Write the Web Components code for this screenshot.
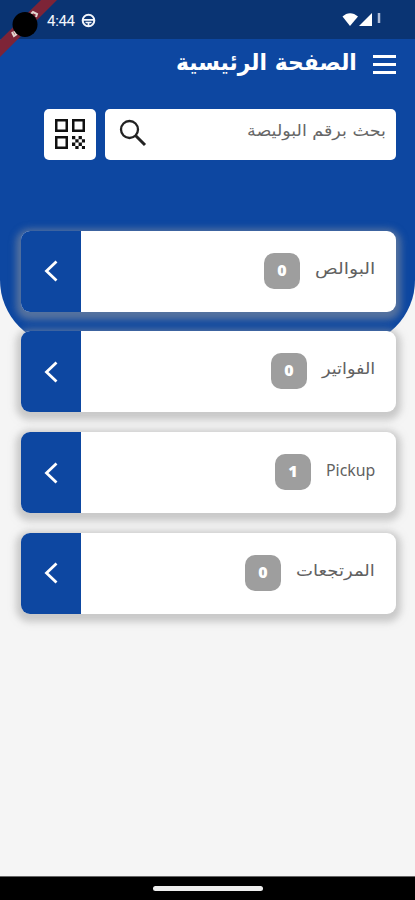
<!DOCTYPE html>
<html lang="ar"><head><meta charset="utf-8"><title>الصفحة الرئيسية</title>
<style>html,body{margin:0;height:100%;overflow:hidden;background:#f5f5f5}</style></head>
<body><home-screen></home-screen>
<script>
const define=(name,html,init)=>customElements.define(name,class extends HTMLElement{
  connectedCallback(){
    if(this.shadowRoot)return;
    const t=document.createElement('template');t.innerHTML=html;
    this.attachShadow({mode:'open'}).append(t.content.cloneNode(true));
    if(init)init(this,this.shadowRoot);
  }
});

// One line of text, condensed or widened to the width it is given.
define('fit-text',`<style>
:host{display:block;height:24px;line-height:24px;white-space:nowrap;direction:rtl}
span{display:inline-block;line-height:24px;transform-origin:100% 50%}
</style><span><slot></slot></span>`,(el,root)=>{
  const w=+el.getAttribute('width'),s=root.querySelector('span');
  el.style.width=w+'px';
  s.style.transform='scaleX('+w/s.offsetWidth+')';
});

define('status-bar',`<style>
:host{display:flex;position:relative;box-sizing:border-box;height:39px;background:#0a3473;align-items:center;padding:2px 31px 0 47px;color:#f2f5fb;font:15px/20px Roboto,sans-serif}
.band{position:absolute;left:0;top:0}
.time{width:28px;letter-spacing:-.3px}.globe{margin-left:6px}
.right{margin-left:auto;margin-top:-1px}
</style>
<svg class="band" width="62" height="62" viewBox="0 0 62 62"><path d="M41 0H57L0 57V40Z" fill="#7d2437"/><g stroke="#e6d5cf" stroke-width="2" fill="none"><path d="M31 14l2-2 4 2-1 3"/><path d="M12 32l2 4 3-2M14 31l2 3"/></g><circle cx="25" cy="24.500" r="12.500" fill="#000"/></svg>
<span class="time">4:44</span>
<svg class="globe" width="15" height="15" viewBox="0 0 15 15"><circle cx="7.500" cy="7.500" r="5.800" fill="none" stroke="#f2f5fb" stroke-width="2"/><path d="M2 6.800h11M4.500 9.500h6M7.500 9v4" stroke="#f2f5fb" stroke-width="1.700"/></svg>
<svg class="right" width="42" height="16" viewBox="0 0 42 16"><path d="M.5 4.500C5 0 11 0 16 4.500L8 14Z" fill="#fff"/><path d="M17 14L30 1V14Z" fill="#fff"/><path d="M37 1v10" stroke="#aebcd8" stroke-width="2.500"/></svg>`);

define('page-header',`<style>
:host{display:block;box-sizing:border-box;height:307px;border-radius:0 0 66px 66px;background:#0d47a1;padding-top:11px}
.title{display:flex;direction:rtl;padding-right:19px;gap:16px;color:#fff;font:bold 23px "DejaVu Sans",sans-serif}
.title svg{margin-top:4px}
.search{display:flex;gap:9px;padding:33px 19px 0 44px}
.box{box-sizing:border-box;height:51px;background:#fff;border-radius:5px;display:flex}
.qr{width:52px;align-items:center;justify-content:center}
.field{flex:1;justify-content:space-between;padding:10px 10px 0 14px;color:#666;font:16px "DejaVu Sans",sans-serif}
</style>
<div class="title"><svg width="23" height="22" viewBox="0 0 23 22"><path d="M0 2.500h23M0 10.500h23M0 18.500h23" stroke="#fff" stroke-width="3"/></svg><fit-text width="181">الصفحة الرئيسية</fit-text></div>
<div class="search"><div class="box qr">
<svg width="30" height="31" viewBox="0 0 30 31" fill="#111"><path fill-rule="evenodd" d="M0 0h13v13H0zM2.500 2.500v8h8v-8zM17 0h13v13H17zM19.500 2.500v8h8v-8zM0 17h13v13H0zM2.500 19.500v8h8v-8z"/><path d="M17 17h3.300v3.300H17zM23.600 17h3.300v3.300h-3.300zM20.300 20.300h3.300v3.300h-3.300zM26.900 20.300h3.100v3.300h-3.100zM17 23.600h3.300v3.300H17zM23.600 23.600h3.300v3.300h-3.300zM20.300 26.900h3.300v3.100h-3.300zM26.900 26.900h3.100v3.100h-3.100z"/></svg></div>
<div class="box field"><svg width="28" height="28" viewBox="0 0 28 28" fill="none" stroke="#222"><circle cx="10.500" cy="10.500" r="8.500" stroke-width="2.300"/><path d="M16.500 16.500L26 26" stroke-width="3"/></svg><fit-text width="139">بحث برقم البوليصة</fit-text></div></div>`);

define('menu-card',`<style>
:host{display:flex;height:81px;border-radius:9px;background:#fff;direction:rtl;box-shadow:0 3px 7px 5px rgba(158,158,158,.5);color:#616161;font:16px "DejaVu Sans",sans-serif}
.label{margin:26px 21px 0 0}
.badge{box-sizing:border-box;width:36px;height:36px;border-radius:10px;background:#9e9e9e;color:#fff;margin:22px 15px 0 auto;text-align:center;font:800 16px/34px "Open Sans","Noto Sans",sans-serif}
.go{width:60px;border-radius:9px 0 0 9px;background:#0d47a1;display:flex;align-items:center;justify-content:center}
</style><div class="label"><slot></slot></div><div class="badge"></div><div class="go"><svg width="14" height="22" viewBox="0 0 14 22"><path d="M12.500 1.500L2.500 11L12.500 20.500" fill="none" stroke="#fff" stroke-width="2.800"/></svg></div>`,(el,root)=>{root.querySelector('.badge').textContent=el.getAttribute('count')});

define('gesture-bar',`<style>
:host{display:flex;box-sizing:border-box;height:24px;background:#000;border-top:1px solid #666;justify-content:center;padding-top:9px}
i{width:110px;height:5px;border-radius:3px;background:#eee}
</style><i></i>`);

define('home-screen',`<style>
:host{display:flex;flex-direction:column;width:415px;height:900px;background:#f5f5f5}
status-bar{z-index:1}
.cards{display:flex;flex-direction:column;gap:19.800px;padding:0 19px 0 21px;margin-top:-115.500px}
gesture-bar{margin-top:auto}
.latin{font:16.500px "Noto Sans",sans-serif}
</style>
<status-bar></status-bar><page-header></page-header>
<div class="cards">
<menu-card count="0"><fit-text width="60">البوالص</fit-text></menu-card>
<menu-card count="0"><fit-text width="53">الفواتير</fit-text></menu-card>
<menu-card count="1"><fit-text class="latin" width="49">Pickup</fit-text></menu-card>
<menu-card count="0"><fit-text width="79">المرتجعات</fit-text></menu-card>
</div><gesture-bar></gesture-bar>`);
</script></body></html>
